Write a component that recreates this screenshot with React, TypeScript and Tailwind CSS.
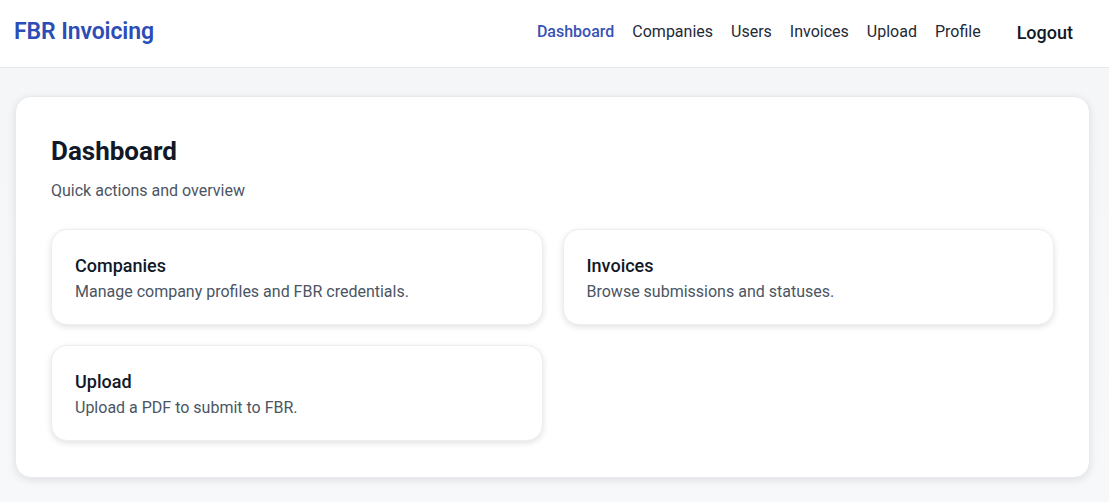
import React from "react";

const links = ["Dashboard", "Companies", "Users", "Invoices", "Upload", "Profile"];

const actions = [
  { title: "Companies", desc: "Manage company profiles and FBR credentials." },
  { title: "Invoices", desc: "Browse submissions and statuses." },
  { title: "Upload", desc: "Upload a PDF to submit to FBR." },
];

const NavBar = ({ active }: { active: string }) => {
  return (
    <header className="h-[68px] bg-white border-b border-[#e5e7eb] flex items-center justify-between pl-[14px] pr-[20px] pb-[3px]">
      <span className="text-[23px] font-semibold text-[#2d4db6] tracking-[-0.1px]">FBR Invoicing</span>
      <nav className="flex items-center">
        <div className="flex items-center gap-[18px] text-[16px] text-[#1f2937]">
          {links.map((l) => (
            <a key={l} className={l === active ? "text-[#3853b3] font-medium" : ""}>
              {l}
            </a>
          ))}
        </div>
        <button className="ml-[20px] px-4 text-[18px] font-medium text-[#111827]">Logout</button>
      </nav>
    </header>
  );
};

const ActionCard = ({ title, desc }: { title: string; desc: string }) => (
  <div className="bg-white rounded-[16px] border border-[#eceef1] shadow-[0_2px_6px_rgba(0,0,0,0.12)] px-[23px] py-6 h-[96px]">
    <h3 className="text-[18px] leading-6 font-medium text-[#111827]">{title}</h3>
    <p className="mt-[3px] text-[16px] leading-[22px] text-[#4b5563]">{desc}</p>
  </div>
);

export default function App() {
  return (
    <div className="min-h-[502px] bg-gradient-to-b from-[#f5f6f8] to-[#f7f8fa]" style={{ fontFamily: "Roboto, 'Noto Sans', sans-serif" }}>
      <NavBar active="Dashboard" />
      <main className="pl-[15px] pr-[19px] pt-[28px] pb-6">
        <section className="bg-white rounded-[16px] border border-[#e8eaee] shadow-[0_2px_8px_rgba(0,0,0,0.10)] px-[35px] pt-[36px] pb-[36px]">
          <h1 className="text-[26px] leading-9 font-bold text-[#111827]">Dashboard</h1>
          <p className="mt-[11px] text-[16px] leading-[22px] text-[#4b5563]">Quick actions and overview</p>
          <div className="mt-[27px] grid grid-cols-2 gap-5">
            {actions.map((a) => (
              <ActionCard key={a.title} title={a.title} desc={a.desc} />
            ))}
          </div>
        </section>
      </main>
    </div>
  );
}
